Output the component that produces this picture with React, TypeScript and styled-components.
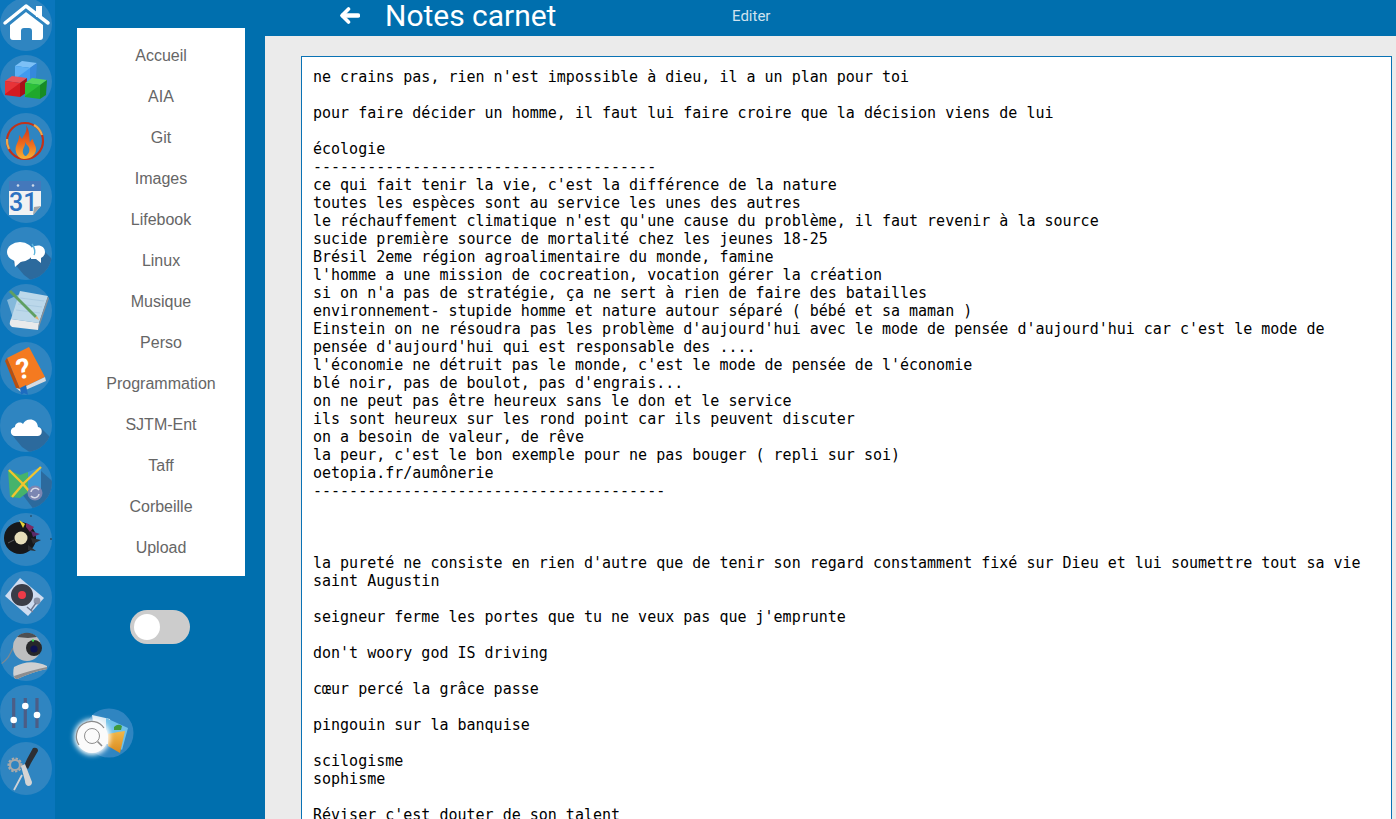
import type { ReactNode } from "react";
import styled, { createGlobalStyle } from "styled-components";

const navItems = [
  "Accueil",
  "AIA",
  "Git",
  "Images",
  "Lifebook",
  "Linux",
  "Musique",
  "Perso",
  "Programmation",
  "SJTM-Ent",
  "Taff",
  "Corbeille",
  "Upload",
];

const noteText = `ne crains pas, rien n'est impossible à dieu, il a un plan pour toi

pour faire décider un homme, il faut lui faire croire que la décision viens de lui

écologie
--------------------------------------
ce qui fait tenir la vie, c'est la différence de la nature
toutes les espèces sont au service les unes des autres
le réchauffement climatique n'est qu'une cause du problème, il faut revenir à la source
sucide première source de mortalité chez les jeunes 18-25
Brésil 2eme région agroalimentaire du monde, famine
l'homme a une mission de cocreation, vocation gérer la création
si on n'a pas de stratégie, ça ne sert à rien de faire des batailles
environnement- stupide homme et nature autour séparé ( bébé et sa maman )
Einstein on ne résoudra pas les problème d'aujourd'hui avec le mode de pensée d'aujourd'hui car c'est le mode de pensée d'aujourd'hui qui est responsable des ....
l'économie ne détruit pas le monde, c'est le mode de pensée de l'économie
blé noir, pas de boulot, pas d'engrais...
on ne peut pas être heureux sans le don et le service
ils sont heureux sur les rond point car ils peuvent discuter
on a besoin de valeur, de rêve
la peur, c'est le bon exemple pour ne pas bouger ( repli sur soi)
oetopia.fr/aumônerie
---------------------------------------



la pureté ne consiste en rien d'autre que de tenir son regard constamment fixé sur Dieu et lui soumettre tout sa vie
saint Augustin

seigneur ferme les portes que tu ne veux pas que j'emprunte

don't woory god IS driving

cœur percé la grâce passe

pingouin sur la banquise

scilogisme
sophisme

Réviser c'est douter de son talent
`;

const GlobalStyle = createGlobalStyle`
  html, body {
    margin: 0;
    height: 100%;
    overflow: hidden;
  }

  body {
    font-family: Roboto, "Liberation Sans", sans-serif;
  }
`;

const Root = styled.div`
  display: grid;
  grid-template-columns: 55px 210px 1fr;
  height: 819px;
  overflow: hidden;
  background: #006fae;
`;

const Rail = styled.div`
  display: flex;
  flex-direction: column;
  gap: 4.25px;
  margin-top: -2px;
  background: #0a76bc;
`;

const Disc = styled.div`
  flex: none;
  width: 52px;
  height: 53px;
  border-radius: 50%;
  background: #2f85c1;
  overflow: hidden;

  > svg {
    display: block;
  }
`;

const Sidebar = styled.aside`
  display: flex;
  flex-direction: column;
  align-items: center;
  padding: 28px 20px 0 22px;
`;

const Nav = styled.nav`
  display: flex;
  flex-direction: column;
  width: 100%;
  padding: 7px 0 8px;
  background: #fff;
`;

const NavItem = styled.a`
  height: 41px;
  line-height: 41px;
  text-align: center;
  font-family: "Liberation Sans", Arial, sans-serif;
  font-size: 16px;
  color: #666;
`;

const Toggle = styled.div`
  display: flex;
  align-items: center;
  width: 60px;
  height: 34px;
  margin: 34px 2px 0 0;
  padding: 0 4px;
  box-sizing: border-box;
  border-radius: 17px;
  background: #ccc;
`;

const Knob = styled.span`
  width: 26px;
  height: 26px;
  border-radius: 50%;
  background: #fff;
`;

const SearchWidget = styled.div`
  align-self: flex-start;
  margin: 64px 0 0 -5px;

  > svg {
    display: block;
    overflow: visible;
  }
`;

const Main = styled.main`
  display: flex;
  flex-direction: column;
  min-width: 0;
`;

const Header = styled.header`
  display: flex;
  align-items: flex-start;
  flex: none;
  height: 36px;
  padding-left: 75px;
  color: #fff;
`;

const BackArrow = styled.svg`
  flex: none;
  margin-top: 7px;
`;

const Title = styled.h1`
  flex: none;
  width: 346px;
  margin: 0 0 0 26px;
  font-size: 30px;
  font-weight: 400;
  line-height: 32px;
  letter-spacing: -0.02px;
  transform: translateX(-1px);
`;

const EditLink = styled.a`
  margin-top: 7px;
  font-size: 15px;
  line-height: 18px;
  color: #cfe2ef;
`;

const Content = styled.div`
  flex: 1;
  min-height: 0;
  padding: 20px 4px 0 36px;
  background: #ebebeb;
`;

const NoteCard = styled.pre`
  height: 100%;
  margin: 0;
  padding: 11px 11px 0;
  box-sizing: border-box;
  overflow: hidden;
  border: 1px solid #0a72b4;
  border-bottom: none;
  background: #fff;
  color: #000;
  font-family: "DejaVu Sans Mono", monospace;
  font-size: 15px;
  line-height: 18px;
  white-space: pre-wrap;
`;

const IconText = styled.text<{ $weight?: number }>`
  font-family: Roboto, "Liberation Sans", sans-serif;
  font-weight: ${({ $weight }) => $weight ?? 700};
`;

const Svg = (props: { children: ReactNode }) => (
  <svg width="53" height="53" viewBox="0 0 53 53">
    {props.children}
  </svg>
);

const HomeIcon = () => (
  <Svg>
    <path d="M36 8h6v11h-6z" fill="#fff" />
    <path d="M5 25 L26 8 L48 25" fill="none" stroke="#fff" strokeWidth="3.5" strokeLinecap="round" strokeLinejoin="round" />
    <path d="M10 27 L26 14 L43 27 V39 Q43 42 40 42 H32 V33 Q32 30 29 30 H24 Q21 30 21 33 V42 H13 Q10 42 10 39 Z" fill="#fff" />
  </Svg>
);

const Cube = (props: { x: number; y: number; top: string; front: string; side: string; shine: string }) => (
  <g transform={`translate(${props.x} ${props.y})`}>
    <path d="M0 5 L7 0 L22 2 L15 7 Z" fill={props.top} />
    <path d="M0 5 L15 7 L15 21 L0 19 Z" fill={props.front} />
    <path d="M0 5 L15 7 L0 18 Z" fill={props.shine} />
    <path d="M15 7 L22 2 L21 17 L15 21 Z" fill={props.side} />
  </g>
);

const CubesIcon = () => (
  <Svg>
    <Cube x={15} y={6} top="#7cc0f6" front="#3f9bef" shine="#5cb0f4" side="#3588dc" />
    <Cube x={5} y={21} top="#e8545a" front="#d21a20" shine="#e83338" side="#a80f18" />
    <Cube x={25} y={23} top="#55d65e" front="#1fa82c" shine="#2cc038" side="#178c24" />
  </Svg>
);

const FireIcon = () => (
  <Svg>
    <defs>
      <linearGradient id="flameGrad" x1="0" y1="0" x2="0" y2="1">
        <stop offset="0" stopColor="#c9301a" />
        <stop offset="0.55" stopColor="#ee6a1e" />
        <stop offset="1" stopColor="#f6b234" />
      </linearGradient>
    </defs>
    <circle cx="25" cy="28" r="18" fill="none" stroke="#c0321a" strokeWidth="2.2" />
    <path d="M34 12 A18 18 0 0 1 42 22" fill="none" stroke="#eda84a" strokeWidth="2.2" />
    <path d="M7 26 A18 18 0 0 0 9 36" fill="none" stroke="#eda84a" strokeWidth="2.2" />
    <path d="M26 12 C28 18 24 21 22 26 C21 24 20 23 19 22 C20 28 14 32 16 39 C17 43 20 46 24 46 C31 46 36 42 36 36 C36 32 33 30 33 26 C31 27 30 28 30 30 C29 24 30 18 26 12 Z" fill="url(#flameGrad)" />
    <path d="M25 29 C26 33 22 35 23 40 C24 43 26 44 27 42 C30 40 30 35 28 33 C27 32 26 31 25 29 Z" fill="#2f85c1" />
  </Svg>
);

const CalendarIcon = () => (
  <Svg>
    <path d="M9 11 H41 V36 L33 45 H9 Z" fill="#f1f2f3" />
    <path d="M9 11 H41 V21 H9 Z" fill="#4478bb" />
    <circle cx="18" cy="15.500" r="1.300" fill="#cfdae8" />
    <circle cx="33" cy="15.500" r="1.300" fill="#cfdae8" />
    <path d="M41 36 L33 45 L34 37 Z" fill="#a3a5a8" />
    <IconText $weight={500} x="9" y="41" fontSize="25" fill="#2d72c2">31</IconText>
  </Svg>
);

const ChatIcon = () => (
  <Svg>
    <path d="M13 35 L28 26 L44 24 L60 40 L40 60 L24 48 Z" fill="#2c6a9d" />
    <path d="M31 21 C38 16 45 19 45 25 C45 28 43 30 41 31 L41 36 L36 32 L31 32 Z" fill="#fff" />
    <path d="M32 17 C34 20 36 24 34 28" fill="none" stroke="#5db4dc" strokeWidth="1.4" />
    <ellipse cx="20" cy="25" rx="13" ry="10" fill="#fff" />
    <path d="M14 32 L15 40 L23 33 Z" fill="#fff" />
  </Svg>
);

const NotesIcon = () => (
  <Svg>
    <path d="M7 16 L20 10 L13 34 Z" fill="#a9cfe6" opacity="0.7" />
    <path d="M20 7 L48 12 L39 39 L11 35 Z" fill="#bcd8ea" />
    <path d="M20 14 L44 17 M18 20 L42 23 M16 26 L40 29" stroke="#a6c8de" strokeWidth="0.8" />
    <path d="M11 35 L39 39 L38 46 L12 43 Q8 40 11 35 Z" fill="#e9eaeb" />
    <path d="M48 12 L39 39 L38 46 L49 14 Z" fill="#8b9096" />
    <path d="M9 8 L11 6 L37 32 L35 34 Z" fill="#5f9f62" />
    <path d="M35 34 L37 32 L39 36 Z" fill="#e6b06a" />
  </Svg>
);

const BookIcon = () => (
  <Svg>
    <path d="M7 16 L29 5 L45 35 L20 47 Z" fill="#f47a20" />
    <path d="M5 19 L7 16 L20 47 L16 46 Z" fill="#b94f0f" />
    <path d="M16 46 L20 47 L45 35 L46 39 L21 50 Z" fill="#d6dbe0" />
    <path d="M20 46 L26 43 L28 53 L24 51 L21 53 Z" fill="#1d6cc0" />
    <IconText x="16" y="36" fontSize="28" fill="#fff" transform="rotate(-10 26 25)">?</IconText>
  </Svg>
);

const CloudIcon = () => (
  <Svg>
    <path d="M12 36 L30 25 L42 30 L60 48 L40 60 L22 48 Z" fill="#2c6a9d" />
    <path d="M15 37 C10 37 9 29 15 28 C15 24 20 22 23 25 C25 19 37 18 38 28 C43 28 43 37 38 37 Z" fill="#fff" />
  </Svg>
);

const MapIcon = () => (
  <Svg>
    <path d="M22 38 L41 15 L60 32 L45 60 L35 55 Z" fill="#2c6a9d" />
    <path d="M8 14 L20 19 V42 L10 41 Z" fill="#45b36c" />
    <path d="M20 19 L28 16 L28 36 L20 42 Z" fill="#45b36c" />
    <path d="M28 16 L41 11 V33 L28 36 Z" fill="#3f98d5" />
    <path d="M9 14 L23 28 L12 41 M41 11 L23 28 L29 35" fill="none" stroke="#f2c52e" strokeWidth="2.4" />
    <circle cx="35" cy="37" r="7.500" fill="#7c86b2" />
    <path d="M31 36 A4.500 4.500 0 0 1 39 34 M39 38 A4.500 4.500 0 0 1 31 40" fill="none" stroke="#d9dbe8" strokeWidth="1.500" />
  </Svg>
);

const VinylIcon = () => (
  <Svg>
    <circle cx="20" cy="25" r="16" fill="#17181a" />
    <path d="M8 30 L14 27" stroke="#6a6b6e" strokeWidth="0.8" />
    <circle cx="21" cy="25" r="6.500" fill="#e6deba" />
    <path d="M19 7 L25 11 L23 15 Z" fill="#e8d33a" />
    <path d="M26 10 L34 14 L30 19 L26 14 Z" fill="#7a2a62" />
    <path d="M31 18 L40 21 L33 24 Z" fill="#5a2a68" />
    <path d="M31 25 L41 27 L33 31 Z" fill="#2c2d30" />
    <path d="M28 32 L36 38 L28 37 Z" fill="#2c2d30" />
    <circle cx="31" cy="3" r="0.7" fill="#222" />
    <circle cx="51" cy="26" r="0.8" fill="#222" />
  </Svg>
);

const TurntableIcon = () => (
  <Svg>
    <path d="M20 7 L44 27 L28 45 L5 25 Z" fill="#cfdcf0" />
    <circle cx="22" cy="24" r="11" fill="#3a3d48" />
    <circle cx="22" cy="24" r="4" fill="#ee3b48" />
    <circle cx="37" cy="30" r="3.400" fill="#8a93a8" />
    <path d="M36 32 L31 39 M27 36 L33 41" stroke="#6f7890" strokeWidth="1.400" />
  </Svg>
);

const WebcamIcon = () => (
  <Svg>
    <path d="M13 20 C9 28 8 31 1 36" fill="none" stroke="#7b8893" strokeWidth="1.300" />
    <path d="M14 39 Q30 30 47 38 L47 41 Q32 44 15 52 Q12 46 14 39 Z" fill="#cfd0d1" />
    <path d="M15 52 Q32 44 47 41 L47 39 Q32 42 14 48 Z" fill="#8c8d8f" />
    <circle cx="27" cy="19" r="14" fill="#bdbebf" />
    <path d="M17 9 A14 14 0 0 1 37 9 L28 10 Z" fill="#4d4f52" />
    <circle cx="34" cy="20" r="8" fill="#26272a" />
    <circle cx="34" cy="21" r="3.600" fill="#0d1250" />
    <circle cx="33" cy="12.500" r="1.200" fill="#3fd84a" />
  </Svg>
);

const SlidersIcon = () => (
  <Svg>
    <path d="M13.700 13 V43 M25.300 13 V43 M37 13 V43" stroke="#4c5d86" strokeWidth="3.200" />
    <circle cx="13.700" cy="35" r="3.300" fill="#fff" />
    <circle cx="25.300" cy="21" r="3.300" fill="#fff" />
    <circle cx="37" cy="30" r="3.300" fill="#fff" />
  </Svg>
);

const ToolsIcon = () => (
  <Svg>
    <circle cx="15" cy="23" r="6.500" fill="none" stroke="#a9a9a9" strokeWidth="2" strokeDasharray="2.400 1.400" />
    <circle cx="15" cy="23" r="5" fill="none" stroke="#a9a9a9" strokeWidth="2.200" />
    <path d="M33 6 Q38 5 38 9 L31 21 L28 27 L24 24 L27 17 Z" fill="#2d2f33" />
    <path d="M21 24 L25 22 L32 40 Q32 44 28 44 Q25 43 25 39 Z" fill="#d4d4d4" />
    <path d="M22 33 L14 48" stroke="#cfd2d6" strokeWidth="1.800" />
  </Svg>
);

const railIcons = [
  HomeIcon,
  CubesIcon,
  FireIcon,
  CalendarIcon,
  ChatIcon,
  NotesIcon,
  BookIcon,
  CloudIcon,
  MapIcon,
  VinylIcon,
  TurntableIcon,
  WebcamIcon,
  SlidersIcon,
  ToolsIcon,
];

const SearchGraphic = () => (
  <svg width="62" height="50" viewBox="0 0 62 50">
    <defs>
      <filter id="glow" x="-40%" y="-40%" width="180%" height="180%">
        <feGaussianBlur stdDeviation="2.500" />
      </filter>
      <linearGradient id="folderGrad" x1="0" y1="0" x2="0" y2="1">
        <stop offset="0" stopColor="#f2b84a" />
        <stop offset="1" stopColor="#d98a1e" />
      </linearGradient>
    </defs>
    <circle cx="37" cy="25" r="24.500" fill="#2f85c1" />
    <path d="M20 7 L38 11 L42 36 L24 36 Z" fill="#dcebf4" />
    <path d="M34 10 L56 20 L50 42 L34 30 Z" fill="#6fc0e8" />
    <path d="M42 19 Q46 15 50 18 L49 22 L42 22 Z" fill="#3f9a3c" />
    <path d="M36 26 L46 24 L53 23 L48 45 L36 38 Z" fill="url(#folderGrad)" />
    <circle cx="20" cy="29" r="18" fill="#fff" filter="url(#glow)" />
    <circle cx="20" cy="29" r="16" fill="#fbfbfb" />
    <path d="M7 37 A15 15 0 0 1 32 20" fill="none" stroke="#8a8a8a" strokeWidth="1.200" />
    <circle cx="20" cy="28" r="7.500" fill="none" stroke="#8f8f8f" strokeWidth="1" />
    <path d="M25.500 33.500 L30 38" stroke="#8a8a8a" strokeWidth="1.600" />
  </svg>
);

const App = () => {
  return (
    <>
      <GlobalStyle />
      <Root>
        <Rail>
          {railIcons.map((Icon, index) => (
            <Disc key={index}>
              <Icon />
            </Disc>
          ))}
        </Rail>
        <Sidebar>
          <Nav>
            {navItems.map((item) => (
              <NavItem key={item}>{item}</NavItem>
            ))}
          </Nav>
          <Toggle>
            <Knob />
          </Toggle>
          <SearchWidget>
            <SearchGraphic />
          </SearchWidget>
        </Sidebar>
        <Main>
          <Header>
            <BackArrow width="20" height="17" viewBox="0 0 20 17" fill="none" stroke="#fff" strokeLinecap="round" strokeLinejoin="round">
              <path d="M8.500 2 L2 8.500 L8.500 15" strokeWidth="3.600" />
              <path d="M3 8.500 H18" strokeWidth="4.400" />
            </BackArrow>
            <Title>Notes carnet</Title>
            <EditLink>Editer</EditLink>
          </Header>
          <Content>
            <NoteCard>{noteText}</NoteCard>
          </Content>
        </Main>
      </Root>
    </>
  );
};

export default App;
